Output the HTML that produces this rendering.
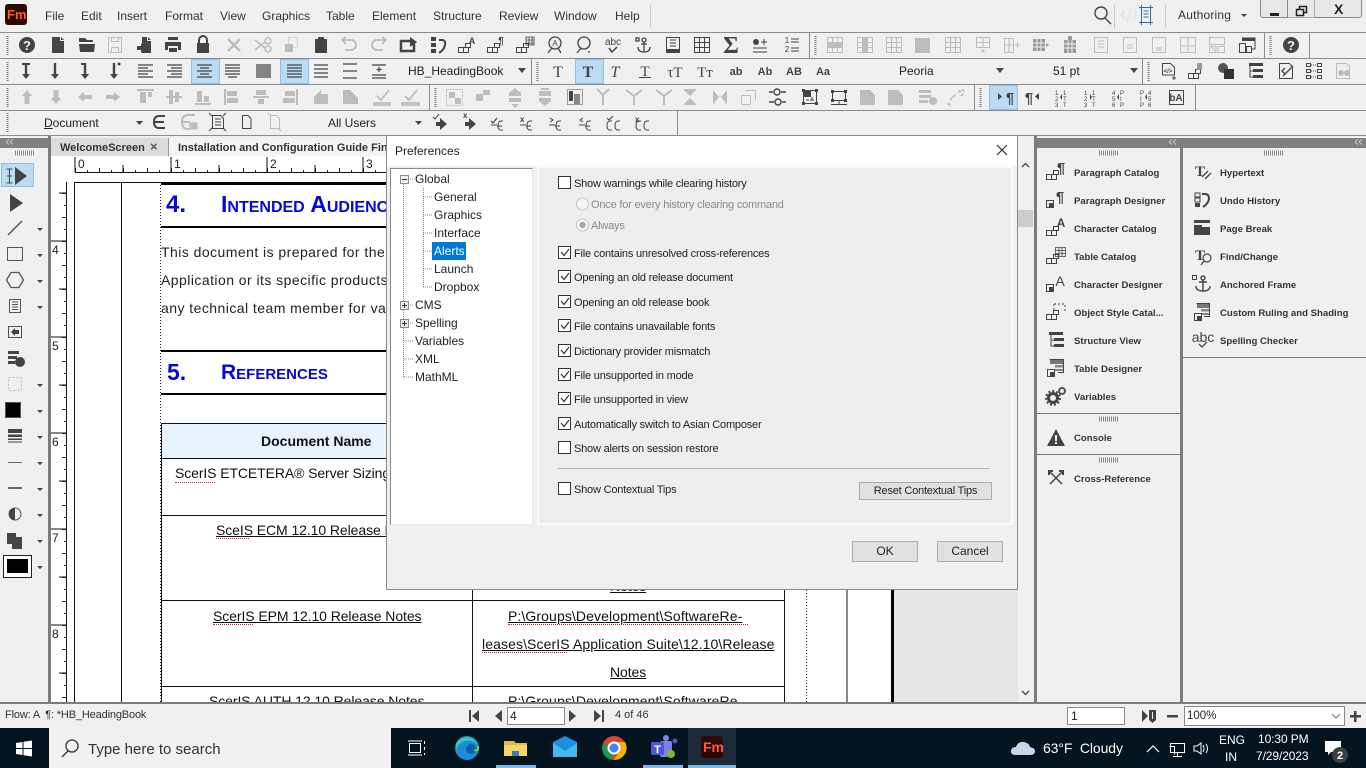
<!DOCTYPE html>
<html><head><meta charset="utf-8"><title>Preferences</title>
<style>
html,body{margin:0;padding:0;width:1366px;height:768px;overflow:hidden;background:#f0f0f0;font-family:"Liberation Sans",sans-serif}
.a{position:absolute}
.t{position:absolute;white-space:nowrap;line-height:14px;color:#333}
.m{font-size:12px;top:9px}
.tree{font-size:12px;color:#222}
.c{font-size:11px;color:#222;left:574px;letter-spacing:-.2px;margin-top:1px}
.gr{color:#8a8a8a}
.p{font-size:9.6px;font-weight:bold;color:#333}
.b{font-size:14px;color:#222;letter-spacing:.45px;line-height:16px}
.u{font-size:14px;color:#111;letter-spacing:-.08px;line-height:16px;text-decoration:underline;text-align:center}
.sq{position:absolute;height:2px;border-bottom:1px dotted #d02020}
.cb{position:absolute;left:558px;width:11px;height:11px;border:1px solid #333;background:#fff}
.btn{position:absolute;background:#e1e1e1;border:1px solid #adadad;font-size:12px;color:#222;text-align:center;box-sizing:border-box}
.h{position:absolute;background:#bcdcf4;border:1px solid #8fbfe6;box-sizing:border-box}
.w{color:#fff}
</style></head><body>

<!-- toolbar frames -->
<div class="a" style="left:0;top:32px;width:1366px;height:1px;background:#8c8c8c"></div>
<div class="a" style="left:0;top:58px;width:1366px;height:1px;background:#8c8c8c"></div>
<div class="a" style="left:0;top:84px;width:1366px;height:1px;background:#8c8c8c"></div>
<div class="a" style="left:0;top:110px;width:1366px;height:1px;background:#8c8c8c"></div>
<div class="a" style="left:809px;top:32px;width:1px;height:26px;background:#8c8c8c"></div>
<div class="a" style="left:1264px;top:32px;width:1px;height:26px;background:#8c8c8c"></div>
<div class="a" style="left:1309px;top:32px;width:1px;height:26px;background:#8c8c8c"></div>
<div class="a" style="left:531px;top:59px;width:1px;height:25px;background:#8c8c8c"></div>
<div class="a" style="left:1142px;top:59px;width:1px;height:25px;background:#8c8c8c"></div>
<div class="a" style="left:429px;top:85px;width:1px;height:25px;background:#8c8c8c"></div>
<div class="a" style="left:974px;top:85px;width:1px;height:25px;background:#8c8c8c"></div>
<div class="a" style="left:1195px;top:85px;width:1px;height:25px;background:#8c8c8c"></div>
<div class="a" style="left:677px;top:111px;width:1px;height:24px;background:#8c8c8c"></div>
<div class="h" style="left:191px;top:59px;width:29px;height:25px"></div>
<div class="h" style="left:280px;top:59px;width:29px;height:25px"></div>
<div class="h" style="left:575px;top:59px;width:29px;height:25px"></div>
<div class="h" style="left:989px;top:85px;width:29px;height:25px"></div>

<!-- menu -->
<div class="a" style="left:5px;top:4px;width:22px;height:21px;background:#2b0a05;border-radius:3px"></div>
<div class="t" style="left:7px;top:8px;font-size:13px;font-weight:bold;color:#ff5b2e">Fm</div>
<div class="t m" style="left:45px">File</div><div class="t m" style="left:81px">Edit</div><div class="t m" style="left:117px">Insert</div><div class="t m" style="left:165px">Format</div><div class="t m" style="left:220px">View</div><div class="t m" style="left:262px">Graphics</div><div class="t m" style="left:326px">Table</div><div class="t m" style="left:372px">Element</div><div class="t m" style="left:433px">Structure</div><div class="t m" style="left:499px">Review</div><div class="t m" style="left:554px">Window</div><div class="t m" style="left:615px">Help</div>
<div class="t m" style="left:1178px;top:8px;letter-spacing:.2px">Authoring</div>
<div class="a" style="left:1260px;top:-1px;width:28px;height:19px;background:#e8e8e8;border:1px solid #888;border-radius:0 0 0 3px;box-sizing:border-box"></div>
<div class="a" style="left:1288px;top:-1px;width:27px;height:19px;background:#e8e8e8;border:1px solid #aaa;border-left:0;box-sizing:border-box"></div>
<div class="a" style="left:1315px;top:-1px;width:47px;height:19px;background:#e8e8e8;border:1px solid #888;border-left:0;border-radius:0 0 3px 0;box-sizing:border-box"></div>
<div class="t" style="left:1334px;top:2px;font-size:14px;font-weight:bold;color:#222">X</div>

<div class="t" style="left:408px;top:64px;font-size:12px;color:#222">HB_HeadingBook</div>
<div class="t" style="left:899px;top:64px;font-size:12px;color:#222">Peoria</div>
<div class="t" style="left:1053px;top:64px;font-size:12px;color:#222">51 pt</div>
<div class="t" style="left:44px;top:116px;font-size:12px;color:#222"><u>D</u>ocument</div>
<div class="t" style="left:328px;top:116px;font-size:12px;color:#222">All Users</div>

<!-- panel bars -->
<div class="a" style="left:0;top:135px;width:1366px;height:1px;background:#8c8c8c"></div>
<div class="a" style="left:0;top:138px;width:48px;height:10px;background:#808080"></div>
<div class="a" style="left:48px;top:136px;width:3px;height:567px;background:#7c7c7c"></div>
<div class="a" style="left:1034px;top:136px;width:3px;height:567px;background:#7c7c7c"></div>
<div class="a" style="left:1037px;top:138px;width:329px;height:10px;background:#808080"></div>
<div class="a" style="left:1180px;top:138px;width:3px;height:565px;background:#7c7c7c"></div>
<div class="a" style="left:1037px;top:413px;width:143px;height:1px;background:#777"></div>
<div class="a" style="left:1037px;top:454px;width:143px;height:1px;background:#777"></div>
<div class="a" style="left:1183px;top:357px;width:183px;height:1px;background:#777"></div>
<div class="a" style="left:1px;top:163px;width:33px;height:24px;background:#bcdcf4;border:1px solid #8fbfe6;box-sizing:border-box"></div>

<!-- panel labels -->
<div class="t p" style="left:1074px;top:167px">Paragraph Catalog</div><div class="t p" style="left:1074px;top:195px">Paragraph Designer</div><div class="t p" style="left:1074px;top:223px">Character Catalog</div><div class="t p" style="left:1074px;top:251px">Table Catalog</div><div class="t p" style="left:1074px;top:279px">Character Designer</div><div class="t p" style="left:1074px;top:307px">Object Style Catal...</div><div class="t p" style="left:1074px;top:335px">Structure View</div><div class="t p" style="left:1074px;top:363px">Table Designer</div><div class="t p" style="left:1074px;top:391px">Variables</div><div class="t p" style="left:1074px;top:432px">Console</div><div class="t p" style="left:1074px;top:473px">Cross-Reference</div>
<div class="t p" style="left:1220px;top:167px">Hypertext</div><div class="t p" style="left:1220px;top:195px">Undo History</div><div class="t p" style="left:1220px;top:223px">Page Break</div><div class="t p" style="left:1220px;top:251px">Find/Change</div><div class="t p" style="left:1220px;top:279px">Anchored Frame</div><div class="t p" style="left:1220px;top:307px">Custom Ruling and Shading</div><div class="t p" style="left:1220px;top:335px">Spelling Checker</div>

<!-- tabs -->
<div class="a" style="left:51px;top:138px;width:967px;height:18px;background:#f4f4f4"></div>
<div class="a" style="left:51px;top:138px;width:117px;height:18px;background:#dcdcdc;border-right:1px solid #999"></div>
<div class="t" style="left:60px;top:141px;font-size:11px;font-weight:bold;color:#333">WelcomeScreen</div>
<div class="t" style="left:150px;top:140px;font-size:13px;font-weight:bold;color:#555">×</div>
<div class="t" style="left:178px;top:141px;font-size:11px;font-weight:bold;color:#333">Installation and Configuration Guide Final.fm</div>

<!-- document -->
<div class="a" style="left:0;top:0;width:1366px;height:768px;clip-path:inset(156px 348px 66px 51px)">
 <div class="a" style="left:51px;top:156px;width:843px;height:546px;background:#fff"></div>
 <div class="a" style="left:894px;top:156px;width:124px;height:546px;background:#e6e6e6"></div>
 <svg class="a" style="left:0;top:0" width="1366" height="768">
  <defs>
   <pattern id="hs" x="75" y="168" width="24" height="4" patternUnits="userSpaceOnUse"><rect width="1" height="4" fill="#222"/><rect x="12" y="2" width="1" height="2" fill="#222"/></pattern>
   <pattern id="vs" x="62" y="193" width="4" height="24" patternUnits="userSpaceOnUse"><rect width="4" height="1" fill="#222"/><rect x="2" y="12" width="2" height="1" fill="#222"/></pattern>
  </defs>
  <rect x="75" y="168" width="943" height="4" fill="url(#hs)"/>
  <rect x="62" y="182" width="4" height="520" fill="url(#vs)"/>
  <path d="M75 172.500H1018M66.500 182V702M74.500 182V702M121.500 182V702M847 182V702" stroke="#111" fill="none"/>
  <path d="M75 172V157M171 172V157M267 172V157M363 172V157M459 172V157M123 172V165M219 172V165M315 172V165M51 241H66M51 337H66M51 433H66M51 529H66M51 625H66M59 193H66M59 289H66M59 385H66M59 481H66M59 577H66M59 673H66" stroke="#111" fill="none"/>
  <path d="M160.500 182V702M806.500 182V702" stroke="#222" stroke-dasharray="1 2" fill="none"/>
  <path d="M892.500 182V702" stroke="#000" stroke-width="3"/>
  <path d="M74 182.500H893" stroke="#111"/>
  <rect x="161" y="182" width="700" height="3" fill="#000"/>
  <rect x="161" y="226" width="700" height="2" fill="#000"/>
  <rect x="161" y="350" width="700" height="2" fill="#000"/>
  <rect x="161" y="393" width="700" height="2" fill="#000"/>
  <rect x="162" y="424" width="622" height="34" fill="#e6f2fd"/>
  <path d="M161 423.500H785M161 458.500H785M161 515.500H785M161 600.500H785M161 686.500H785M161.500 424V702M472.500 424V702M784.500 424V702" stroke="#111" fill="none"/>
 </svg>
 <div class="t" style="left:78px;top:157px;font-size:12px;color:#222">0</div><div class="t" style="left:174px;top:157px;font-size:12px;color:#222">1</div><div class="t" style="left:270px;top:157px;font-size:12px;color:#222">2</div><div class="t" style="left:366px;top:157px;font-size:12px;color:#222">3</div>
 <div class="t" style="left:52px;top:243px;font-size:12px;color:#222">4</div><div class="t" style="left:52px;top:339px;font-size:12px;color:#222">5</div><div class="t" style="left:52px;top:435px;font-size:12px;color:#222">6</div><div class="t" style="left:52px;top:531px;font-size:12px;color:#222">7</div><div class="t" style="left:52px;top:627px;font-size:12px;color:#222">8</div>
 <div class="t" style="left:166px;top:192px;line-height:25px;font-size:24px;font-weight:bold;color:#0606d8">4.</div>
 <div class="t" style="left:221px;top:192px;line-height:25px;font-size:23px;font-weight:bold;color:#0606d8;font-variant:small-caps">Intended Audience</div>
 <div class="t" style="left:167px;top:360px;line-height:25px;font-size:23px;font-weight:bold;color:#0606d8">5.</div>
 <div class="t" style="left:221px;top:360px;line-height:25px;font-size:21px;font-weight:bold;color:#0606d8;font-variant:small-caps">References</div>
 <div class="t b" style="left:161px;top:244px">This document is prepared for the ScerIS</div>
 <div class="t b" style="left:161px;top:272px">Application or its specific products and</div>
 <div class="t b" style="left:161px;top:300px">any technical team member for various</div>
 <div class="t" style="left:261px;top:433px;line-height:16px;font-size:14px;font-weight:bold;color:#111">Document Name</div>
 <div class="t b" style="left:175px;top:465px;color:#111;letter-spacing:-.1px">ScerIS ETCETERA® Server Sizing Guide</div>
 <div class="t u" style="left:216px;top:522px">SceIS ECM 12.10 Release Notes</div>
 <div class="t u" style="left:213px;top:608px">ScerIS EPM 12.10 Release Notes</div>
 <div class="t u" style="left:209px;top:693px">ScerIS AUTH 12.10 Release Notes</div>
 <div class="t u" style="left:508px;top:608px;letter-spacing:.1px">P:\Groups\Development\SoftwareRe-</div>
 <div class="t u" style="left:482px;top:636px;letter-spacing:.1px">leases\ScerIS Application Suite\12.10\Release</div>
 <div class="t u" style="left:610px;top:664px">Notes</div>
 <div class="t u" style="left:610px;top:578px">Notes</div>
 <div class="t u" style="left:508px;top:693px;letter-spacing:.1px">P:\Groups\Development\SoftwareRe</div>
 <div class="sq" style="left:175px;top:480px;width:40px"></div>
 <div class="sq" style="left:216px;top:536px;width:33px"></div>
 <div class="sq" style="left:213px;top:622px;width:40px"></div>
 <div class="sq" style="left:508px;top:622px;width:240px"></div>
 <div class="sq" style="left:482px;top:650px;width:85px"></div>
</div>

<!-- scrollbar -->
<div class="a" style="left:1018px;top:156px;width:16px;height:546px;background:#f0f0f0"></div>
<div class="a" style="left:1018px;top:210px;width:15px;height:17px;background:#cdcdcd"></div>

<!-- status bar -->
<div class="a" style="left:0;top:702px;width:1366px;height:2px;background:#7c7c7c"></div>
<div class="t" style="left:5px;top:708px;font-size:11px;color:#333;letter-spacing:-.15px">Flow: A &nbsp;¶: *HB_HeadingBook</div>
<div class="a" style="left:507px;top:707px;width:58px;height:18px;background:#fff;border:1px solid #888;box-sizing:border-box"></div>
<div class="t" style="left:510px;top:709px;font-size:12px;color:#222">4</div>
<div class="t" style="left:615px;top:708px;font-size:11px;color:#333">4 of 46</div>
<div class="a" style="left:1067px;top:707px;width:58px;height:18px;background:#fff;border:1px solid #888;box-sizing:border-box"></div>
<div class="t" style="left:1071px;top:709px;font-size:12px;color:#222">1</div>
<div class="a" style="left:1184px;top:706px;width:161px;height:20px;background:#fff;border:1px solid #888;box-sizing:border-box"></div>
<div class="t" style="left:1187px;top:709px;font-size:11.5px;color:#222">100%</div>

<!-- taskbar -->
<div class="a" style="left:0;top:728px;width:1366px;height:40px;background:#03141f"></div>
<div class="a" style="left:49px;top:728px;width:342px;height:40px;background:#f1f1f1"></div>
<div class="a" style="left:688px;top:728px;width:48px;height:40px;background:#1c2b37"></div>
<div class="a" style="left:496px;top:765px;width:40px;height:3px;background:#76b9ed"></div>
<div class="a" style="left:643px;top:765px;width:40px;height:3px;background:#76b9ed"></div>
<div class="a" style="left:688px;top:765px;width:48px;height:3px;background:#76b9ed"></div>
<div class="t" style="left:88px;top:741px;line-height:18px;font-size:15px;color:#333">Type here to search</div>
<div class="a" style="left:701px;top:736px;width:22px;height:22px;background:#2b0a05;border-radius:3px"></div>
<div class="t w" style="left:703px;top:740px;font-size:14px;font-weight:bold;color:#ff5b2e">Fm</div>
<div class="t w" style="left:1043px;top:741px;font-size:14px;color:#fff;letter-spacing:-.1px">63°F &nbsp;Cloudy</div>
<div class="t w" style="left:1219px;top:733px;font-size:12px;color:#fff">ENG</div>
<div class="t w" style="left:1225px;top:750px;font-size:12px;color:#fff">IN</div>
<div class="t w" style="left:1258px;top:732px;font-size:12px;color:#fff;letter-spacing:-.1px">10:30 PM</div>
<div class="t w" style="left:1256px;top:749px;font-size:12px;color:#fff;letter-spacing:-.1px">7/29/2023</div>

<!-- icons -->
<svg class="a" style="left:0;top:0" width="1366" height="768" font-family="Liberation Sans" >
<defs>
 <g id="cat" fill="none" stroke="currentColor"><rect x="-9.500" y="2.500" width="5" height="5"/><rect x="-4.500" y="2.500" width="5" height="5"/><rect x="-2.500" y="-1.500" width="5" height="4"/></g>
 <g id="des"><rect x="-9.500" y="0.500" width="7" height="7" fill="none" stroke="currentColor"/><rect x="-7" y="3" width="5" height="5" fill="currentColor"/></g>
 <path id="gridi" d="M-7.500-7.500H7.500V7.500H-7.500ZM-7.500-2.500H7.500M-7.500 2.500H7.500M-2.500-7.500V7.500M2.500-7.500V7.500" fill="none" stroke="currentColor"/>
</defs>

<!-- row 1 -->
<g fill="#444" color="#444">
 <circle cx="27" cy="45" r="8"/><text x="27" y="50" text-anchor="middle" font-size="13" font-weight="bold" fill="#f0f0f0">?</text>
 <path transform="translate(58,45)" d="M-6-8H2V-4H6V8H-6ZM3-8L6-5H3Z"/>
 <path transform="translate(87,45)" d="M-8-3V-7H-2L0-5H6V-3ZM-8-1H8L7 7H-7Z"/>
 <path transform="translate(145,45)" d="M-3-8H2V-4H6V8H-3ZM3-8L6-5H3ZM-8 1H-4V-2L1 3-4 8V5H-8Z"/>
 <path transform="translate(173,45)" d="M-5-8H5V-5H-5ZM-8-3H8V5H5V1H-5V5H-8ZM-4 3H4V7H-4Z"/>
 <path transform="translate(203,45)" d="M-6-2H6V8H-6Z"/><path transform="translate(203,45)" d="M-4-2V-5A4 4 0 0 1 4-5V-2" fill="none" stroke="#444" stroke-width="2"/>
 <path transform="translate(321,45)" d="M-6-6H-3V-8H3V-6H6V8H-6Z"/>
 <g transform="translate(408,45)"><path d="M6-2V6H-7V-4H2" fill="none" stroke="#444" stroke-width="2.500"/><path d="M2-8L9-3 2 2Z"/></g>
 <g transform="translate(438,45)"><path d="M-7-8H-2V-4H-7ZM-7-2H-2V2H-7Z"/><rect x="-7" y="4" width="5" height="4"/><path d="M1-5H4Q8-5 7 0 6 5 1 8" fill="none" stroke="#444" stroke-width="2"/></g>
 <g transform="translate(468,45)"><use href="#cat"/><text x="4" y="-1" font-size="9" font-weight="bold" text-anchor="middle">A</text></g>
 <g transform="translate(497,45)"><use href="#cat"/><text x="4" y="-1" font-size="10" font-weight="bold" text-anchor="middle">¶</text></g>
 <g transform="translate(526,45)"><use href="#cat"/><path d="M0-8H8V0H0ZM0-5H8M0-2H8M3-8V0M6-8V0" fill="none" stroke="#444" stroke-width=".8"/></g>
 <g transform="translate(555,45)" fill="none" stroke="#444" stroke-width="1.300"><circle cy="-2" r="6"/><path d="M-3 3L-7 8M3 3L6 8"/></g>
 <text x="555" y="46" font-size="8" text-anchor="middle">A</text>
 <g transform="translate(584,45)" fill="none" stroke="#444" stroke-width="1.300"><circle cy="-2" r="6"/><path d="M-3 3L-7 8"/><path d="M5 6V8" /></g>
 <text x="613" y="45" font-size="10" text-anchor="middle">abc</text><path d="M609 48L612 52 617 47" fill="none" stroke="#444" stroke-width="1.500"/>
 <g transform="translate(644,45)" fill="none" stroke="#444" stroke-width="1.300"><circle cy="-5" r="2"/><path d="M0-3V7M-6 2Q-6 7 0 7 6 7 6 2M-3-1H3"/><rect x="-8" y="-7" width="3" height="3"/></g>
 <g transform="translate(673,45)" fill="none" stroke="#444"><path d="M-6.500-7.500H6.500V7.500H-6.500ZM-3-5H3M-3-2H3M-3 1H3"/></g><rect x="667" y="49" width="13" height="4"/>
 <use href="#gridi" x="702" y="45"/>
 <text x="731" y="53" font-size="24" font-weight="bold" font-family="Liberation Serif" text-anchor="middle">Σ</text>
 <g transform="translate(760,45)"><circle cx="-4" cy="-3" r="3"/><path d="M-7 3H7M-7 7H7M1-3H7M4-6V0" stroke="#444" fill="none"/></g>
 <g transform="translate(792,45)"><path d="M-1-6H7M-1-3H7M-1 3H7M-1 6H7" stroke="#444" fill="none"/><text x="-5" y="-2" font-size="8" text-anchor="middle">1</text><text x="-5" y="7" font-size="8" text-anchor="middle">2</text></g>
 <g transform="translate(1291,45)"><circle r="8"/><text y="5" text-anchor="middle" font-size="13" font-weight="bold" fill="#f0f0f0">?</text></g>
 <g transform="translate(1248,45)"><path d="M-6-7H7V4H3" fill="none" stroke="#444"/><rect x="-6" y="-7" width="13" height="3"/><rect x="-8.500" y="-1.500" width="6" height="9" fill="none" stroke="#444"/><rect x="-1.500" y="1.500" width="5" height="6" fill="none" stroke="#444"/></g>
</g>
<g color="#bdbdbd" fill="#bdbdbd" stroke="none">
 <path transform="translate(115,45)" d="M-6.500-7.500H6.500V7.500H-6.500ZM-3.500-7.500V-3.500H3.500V-7.500M-3.500 7.500V2.500H3.500V7.500" fill="none" stroke="#bdbdbd"/>
 <path transform="translate(234,45)" d="M-6-6L6 6M6-6L-6 6" stroke="#bdbdbd" stroke-width="2.500" fill="none"/>
 <g transform="translate(263,45)" fill="none" stroke="#bdbdbd" stroke-width="1.500"><circle cx="5" cy="4" r="3"/><circle cx="5" cy="-4" r="3"/><path d="M2 3L-8-5M2-3L-8 5"/></g>
 <g transform="translate(291,45)"><rect x="-6" y="-1" width="8" height="8"/><rect x="-2.500" y="-7.500" width="9" height="10" fill="none" stroke="#bdbdbd" stroke-dasharray="1 1"/></g>
 <path transform="translate(349,45)" d="M-3-8L-7-5-3-1M-7-5H2A4.500 4.500 0 0 1 2 5H-4" fill="none" stroke="#bdbdbd" stroke-width="1.800"/>
 <path transform="translate(379,45)" d="M3-8L7-5 3-1M7-5H-2A4.500 4.500 0 0 0-2 5H4" fill="none" stroke="#bdbdbd" stroke-width="1.800"/>
 <use href="#gridi" x="865" y="45"/><use href="#gridi" x="894" y="45"/><use href="#gridi" x="953" y="45"/>
 <g transform="translate(835,45)"><use href="#gridi"/><rect x="-7" y="-3" width="14" height="5"/></g>
 <g transform="translate(865,45)"><rect x="-3" y="-7" width="5" height="14"/></g>
 <rect x="915" y="38" width="15" height="15"/>
 <g transform="translate(983,43)" fill="none" stroke="#bdbdbd"><path d="M-6.500-5.500H6.500V4.500H-6.500ZM-6.500-.5H6.500M0-5.500V4.500M0 6V10M-2 8H2"/></g>
 <g transform="translate(1012,45)" fill="none" stroke="#bdbdbd"><path d="M-7.500-6.500H1.500V7.500H-7.500ZM-3-6.500V7.500M-7.500 0H1.500M3 0H8M5.500-3V3"/></g>
 <g transform="translate(1040,45)"><rect x="-7" y="-6" width="12" height="12" fill="#999"/><path d="M-3-6V6M1-6V6M-7-2H5M-7 2H5" stroke="#f0f0f0" fill="none"/><path d="M6-2L9 0 6 2Z" fill="#999"/></g>
 <g transform="translate(1070,45)"><rect x="-6" y="-5" width="12" height="13" fill="#999"/><rect x="-2" y="-9" width="4" height="5" fill="#999"/><path d="M-2-5V8M2-5V8M-6-1H6M-6 3H6" stroke="#f0f0f0" fill="none"/></g>
 <g transform="translate(1101,45)" fill="none" stroke="#bdbdbd"><path d="M-6.500-7.500H6.500V7.500H-6.500ZM-3-4H3M-3-1H3M-3 2H3"/></g>
 <g transform="translate(1130,45)" fill="none" stroke="#bdbdbd"><path d="M-6.500-7.500H6.500V7.500H-6.500ZM-3 0H3M-3 3H3"/></g>
 <g transform="translate(1159,45)" fill="none" stroke="#bdbdbd"><path d="M-6.500-7.500H6.500V7.500H-6.500ZM-3 3H3M-3 5H3"/></g>
 <g transform="translate(1188,45)" fill="none" stroke="#bdbdbd"><path d="M-7.500-7.500H7.500V7.500H-7.500ZM0-7.500V7.500M-7.500 1H7.500"/></g>
 <g transform="translate(1217,45)" fill="none" stroke="#bdbdbd"><path d="M-7.500-7.500H7.500V-.5H-7.500ZM-7.500 1.500H-1V7.500H-7.500ZM1 1.500H7.500V7.500H1ZM-6 2L-2 6"/></g>
</g>
<!-- grippers -->
<path d="M7.500 36V55M7.500 62V81M7.500 88V107M7.500 113V133M537.500 62V81M435.500 88V107M815.500 36V55M1270.500 36V55M1148.500 62V81M980.500 88V107" stroke="#777" stroke-width="2" stroke-dasharray="1 1" fill="none"/>
<path d="M15 153H34M1099 153H1118M1264 153H1283M1099 419H1118M1099 460H1118" stroke="#888" stroke-width="5" stroke-dasharray="1 1" fill="none"/>
<path d="M1 142L4 139.500M1 142L4 144.500M5 142L8 139.500M5 142L8 144.500" stroke="#ccc" fill="none" transform="translate(5,0)"/>
<path d="M1 142L4 139.500M1 142L4 144.500M5 142L8 139.500M5 142L8 144.500" stroke="#ccc" fill="none" transform="translate(1168,0)"/>
<path d="M1 142L4 139.500M1 142L4 144.500M5 142L8 139.500M5 142L8 144.500" stroke="#ccc" fill="none" transform="translate(1354,0)"/>

<!-- title right -->
<g fill="none" stroke="#444" stroke-width="1.400"><circle cx="1101" cy="13" r="6"/><path d="M1105 18L1111 24"/></g>
<path d="M1114.500 5V29M1165.500 5V27M650.500 5V27" stroke="#ccc"/>
<path d="M1124 10L1122 15 1124 20M1131 8L1127 22M1134 10L1136 15 1134 20" stroke="#ddd" fill="none"/>
<path d="M1139 7.500H1153M1139 22.500H1153M1141.500 5V25M1150.500 5V25M1143.500 11H1148.500M1143.500 14H1148.500M1143.500 17H1148.500" stroke="#2f6ea5" fill="none"/>
<path d="M1241 14H1247L1244 17Z" fill="#444"/>
<rect x="1270" y="13" width="9" height="3" fill="#222"/>
<path d="M1296.500 9.500H1303.500V15.500H1296.500ZM1299.500 9.500V6.500H1306.500V12.500H1303.500" fill="none" stroke="#222" stroke-width="1.500"/>

<!-- row 2 -->
<g fill="#444">
 <path d="M22 63H30V65H27.200V74H30L26 79 22 74H24.800V65H22Z"/>
 <path d="M53.800 63H56.200V74H59L55 79 51 74H53.800Z"/>
 <path d="M81 63H86.200V74H89L85 79 81 74H83.800V65H81Z"/>
 <path d="M112.800 63H115.200V74H118L114 79 110 74H112.800Z"/><circle cx="119" cy="64" r="1.500"/>
</g>
<g stroke="#444" fill="none" stroke-width="1.200">
 <path d="M138 65H153M138 68H148M138 71H153M138 74H148M138 77H153"/>
 <path d="M167 65H182M171 68H182M167 71H182M171 74H182M167 77H182"/>
 <path d="M197 65H212M200 68H209M197 71H212M200 74H209M197 77H212"/>
 <path d="M225 65H240M225 68H240M225 71H240M225 74H240M228 77H237"/>
 <path d="M256 65H271M256 67H271M256 69H271M256 71H271M256 73H271M256 75H271M256 77H271"/>
 <path d="M287 65H302M287 68H302M287 71H302M287 74H302M287 77H302"/>
 <path d="M314 65H328M314 69H328M314 73H328M314 77H328"/>
 <path d="M343 64H357M343 71H357M343 78H357"/>
 <path d="M372 65H386M372 78H386M372 75H386M379 67V72M376.500 69.500H381.500"/>
</g>
<g fill="#444">
 <path d="M518 68H526L522 73Z"/><path d="M996 68H1004L1000 73Z"/><path d="M1130 68H1138L1134 73Z"/>
 <path d="M136 121H143L139.500 125Z"/><path d="M415 121H422L418.500 125Z"/>
 <text x="558" y="77" font-size="16" font-family="Liberation Serif" text-anchor="middle">T</text>
 <text x="588" y="77" font-size="16" font-weight="bold" font-family="Liberation Serif" text-anchor="middle">T</text>
 <text x="615" y="77" font-size="16" font-style="italic" font-family="Liberation Serif" text-anchor="middle">T</text>
 <text x="645" y="76" font-size="15" font-family="Liberation Serif" text-anchor="middle">T</text><rect x="639" y="77" width="12" height="1"/>
 <text x="675" y="77" font-size="15" font-family="Liberation Serif" text-anchor="middle">τT</text>
 <text x="705" y="77" font-size="15" font-family="Liberation Serif" text-anchor="middle">Tт</text>
 <text x="736" y="75" font-size="11" font-weight="bold" text-anchor="middle">ab</text>
 <text x="765" y="75" font-size="11" font-weight="bold" text-anchor="middle">Ab</text>
 <text x="794" y="75" font-size="11" font-weight="bold" text-anchor="middle">AB</text>
 <text x="823" y="75" font-size="11" font-weight="bold" text-anchor="middle">Aa</text>
</g>
<g transform="translate(1169,71)" fill="none" stroke="#444"><path d="M-6.500-7.500H1.500L5.500-3.500V4H-6.500Z"/><path d="M5 5V9M3 7H7"/></g><text x="1168" y="73" font-size="6" font-weight="bold" text-anchor="middle" fill="#444">&lt;/&gt;</text>
<g transform="translate(1198,71)" color="#444"><use href="#cat"/><rect x="-1" y="-8" width="5" height="7" fill="#999"/></g>
<g transform="translate(1227,71)"><circle cx="-4" cy="-3" r="5" fill="#555"/><rect x="-3" y="-2" width="10" height="10" fill="#333"/></g>
<g transform="translate(1256,71)" fill="#444"><rect x="-7" y="-8" width="14" height="3"/><rect x="-3" y="-2" width="10" height="3"/><rect x="-3" y="4" width="10" height="3"/><path d="M-6-6V6H-3M-6 0H-3" fill="none" stroke="#444"/></g>
<g transform="translate(1286,71)" fill="none" stroke="#444"><path d="M-6.500-7.500H3.500L6.500-4.500V7.500H-6.500Z"/><path d="M-1-3L-4 0 -1 3M-3 5L7 -5" stroke-width="1.300"/></g>
<g transform="translate(1314,71)" fill="none" stroke="#444"><rect x="-7.500" y="-7.500" width="4" height="3"/><rect x="3.500" y="-7.500" width="4" height="3"/><rect x="-7.500" y="-1.500" width="4" height="3"/><rect x="3.500" y="-1.500" width="4" height="3"/><rect x="-7.500" y="4.500" width="4" height="3"/><rect x="3.500" y="4.500" width="4" height="3"/><path d="M-3-6H3M-3 0H3M-3 6H3" stroke-dasharray="1 1"/></g>
<g transform="translate(1343,71)"><path d="M-6.500-7.500H3.500L6.500-4.500V7.500H-6.500Z" fill="none" stroke="#bbb"/><circle cx="-2" cy="2" r="3" fill="#bbb"/><circle cx="4" cy="2" r="3" fill="#bbb"/></g>

<!-- row 3 -->
<g fill="#bdbdbd">
 <path d="M27 90L32 96H29.500V104H24.500V96H22Z"/><path d="M56 104L61 98H58.500V90H53.500V98H51Z"/>
 <path d="M78 97L84 92V95H92V99H84V102Z"/><path d="M120 97L114 92V95H106V99H114V102Z"/>
 <path d="M137 89H154V91H137ZM140 92H146V103H140ZM148 92H152V97H148Z"/>
 <path d="M166 96H182V98H166ZM169 90H173V104H169ZM175 92H179V102H175Z"/>
 <path d="M195 103H211V105H195ZM197 91H202V102H197ZM204 96H209V102H204Z"/>
 <path d="M224 89H226V105H224ZM227 91H237V96H227ZM227 98H238V103H227Z"/>
 <path d="M253 96H269V98H253ZM256 90H266V95H256ZM258 99H264V104H258Z"/>
 <path d="M296 89H298V105H296ZM285 91H295V96H285ZM283 98H295V103H283Z"/>
 <path d="M314 104V97L321 90V94H328V104Z"/>
 <path d="M343 90H350L358 98V104H343Z"/>
 <path d="M374 103H390V105H374ZM377 96L381 100 389 90" fill="none" stroke="#bdbdbd" stroke-width="1.800"/>
 <path d="M402 103H419V105H402ZM405 96L409 100 417 90" fill="none" stroke="#bdbdbd" stroke-width="1.800"/>
 <path d="M446.500 89.500H462.500V105.500H446.500Z" fill="none" stroke="#bdbdbd" stroke-dasharray="2 1"/><rect x="449" y="92" width="6" height="6"/><rect x="455" y="98" width="6" height="6"/>
 <rect x="476" y="94" width="7" height="7"/><rect x="483" y="90" width="7" height="5"/>
 <path d="M515 88L521 93V96H509V93ZM509 98H521V102H509ZM511 104H519L515 108Z"/>
 <path d="M545 106L539 101V98H551V101ZM539 91H551V96H539ZM541 88H549V90H541Z"/>
 <path d="M597 89L603 95 609 89M603 95V105" fill="none" stroke="#bdbdbd" stroke-width="2"/>
 <path d="M626 90L634 96 642 90M634 96V105" fill="none" stroke="#bdbdbd" stroke-width="2"/>
 <path d="M656 90L664 96 672 90M664 96V105" fill="none" stroke="#bdbdbd" stroke-width="2"/>
 <path d="M683 89H697L690 96ZM683 105H697L690 98Z"/>
 <path d="M713 90L719 97 713 104ZM727 90L721 97 727 104Z"/>
 <path d="M741.500 95.500H750.500V104.500H741.500ZM745.500 90.500H755.500V100.500" fill="none" stroke="#bdbdbd"/>
 <path d="M860 90H870L875 95V105H860Z"/><path d="M888 90H898L903 95V105H888Z"/>
 <path d="M919 90H931V93H919ZM919 95H931V98H919ZM919 100H928V103H919Z"/><circle cx="933" cy="101" r="4"/>
 <path d="M950 100L956 94M958 92L964 90M948 103L951 106M961 96L964 93" fill="none" stroke="#bdbdbd" stroke-width="2" stroke-dasharray="3 1"/>
</g>
<rect x="567.500" y="89.500" width="15" height="15" fill="none" stroke="#444" stroke-dasharray="1 1"/><rect x="569" y="91" width="4" height="10" fill="#444"/><rect x="574" y="94" width="6" height="10" fill="#888"/>
<g fill="#444" stroke="none">
 <g fill="none" stroke="#444" stroke-width="1.400"><circle cx="777" cy="92" r="3"/><circle cx="778" cy="102" r="3"/><path d="M769 92H773M781 92H786M769 102H774M782 102H786"/></g>
 <rect x="803.500" y="90.500" width="13" height="13" fill="none" stroke="#444"/><rect x="804" y="91" width="7" height="6"/><rect x="802" y="89" width="3" height="3"/><rect x="815" y="89" width="3" height="3"/><rect x="802" y="102" width="3" height="3"/><rect x="815" y="102" width="3" height="3"/><path d="M812 97V100M810 100H814M806 100H809" stroke="#444" fill="none"/>
 <rect x="832.500" y="91.500" width="13" height="9" fill="none" stroke="#444"/><rect x="831" y="90" width="3" height="3"/><rect x="844" y="90" width="3" height="3"/><rect x="831" y="99" width="3" height="3"/><rect x="844" y="99" width="3" height="3"/><rect x="831" y="104" width="16" height="1"/><rect x="838.500" y="100" width="1" height="4"/>
 <path d="M998 93L1002 96.500 998 100Z"/><text x="1010" y="103" font-size="15" font-weight="bold" text-anchor="middle">¶</text>
 <text x="1029" y="103" font-size="15" font-weight="bold" text-anchor="middle">¶</text><path d="M1039 93L1035 96.500 1039 100Z"/>
 <text x="1055" y="95" font-size="6">1</text><text x="1055" y="101" font-size="6">2</text><text x="1055" y="107" font-size="6">3</text><path d="M1062 94L1060 97 1062 100Z"/><text x="1063" y="95" font-size="6">1</text><text x="1063" y="101" font-size="6">T</text><text x="1063" y="107" font-size="6">T</text>
 <text x="1084" y="95" font-size="6">1</text><text x="1084" y="101" font-size="6">2</text><text x="1084" y="107" font-size="6">3</text><path d="M1090 94L1092 97 1090 100Z"/><text x="1092" y="95" font-size="6">1</text><text x="1092" y="101" font-size="6">T</text><text x="1092" y="107" font-size="6">T</text>
 <text x="1112" y="95" font-size="6">4</text><text x="1112" y="101" font-size="6">5</text><text x="1112" y="107" font-size="6">6</text><path d="M1119 94L1117 97 1119 100Z"/><text x="1120" y="95" font-size="6">P</text><text x="1120" y="101" font-size="6">I</text><text x="1120" y="107" font-size="6">P</text>
 <text x="1140" y="95" font-size="6">P</text><text x="1140" y="101" font-size="6">I</text><text x="1140" y="107" font-size="6">P</text><path d="M1147 94L1145 97 1147 100Z"/><text x="1148" y="95" font-size="6">4</text><text x="1148" y="101" font-size="6">5</text><text x="1148" y="107" font-size="6">6</text>
 <path d="M1169.500 90.500H1183.500V104.500H1169.500Z" fill="none" stroke="#444"/><text x="1176" y="101" font-size="10" font-weight="bold" text-anchor="middle">bA</text>
</g>

<!-- row 4 -->
<g fill="none" stroke="#444" stroke-width="2">
 <path d="M165 116H159Q154 116 154 122 154 128 159 128H165M153 122H164"/>
 <g stroke-width="1"><path d="M212.500 115.500H220.500L223.500 118.500V128.500H212.500ZM215 119H221M215 122H221M215 125H221M209 113L212 116M226 131L223 128M226 113L223 116M209 131L212 128"/>
 <path d="M242.500 115.500H248L251 118.500V128.500H242.500Z"/></g>
</g>
<g fill="none" stroke="#bdbdbd" stroke-width="1"><path d="M195 115H188Q182 115 182 122 182 129 188 129H190M181 122H190" stroke-width="2"/><rect x="190" y="123" width="7" height="6" fill="#bdbdbd"/><path d="M270.500 115.500H276.500L279.500 118.500V128.500H270.500ZM268 113L271 116M281 131L278 128"/></g>
<g fill="#444">
 <path d="M436 122H440V118L447 124 440 130V126H436Z"/><path d="M465 122H469V118L476 124 469 130V126H465Z"/>
 <path d="M433 117L435 119 439 114" fill="none" stroke="#444"/><text x="463" y="118" font-size="8" font-weight="bold">x</text>
 <path d="M491 121L493 123 497 118" fill="none" stroke="#444" stroke-width="1.200"/><path d="M491 125H497M503 121H501Q498 121 498 126 498 130 501 130H503M497 126H502" fill="none" stroke="#444"/>
 <text x="520" y="122" font-size="8" font-weight="bold">x</text><path d="M520 125H526M532 121H530Q527 121 527 126 527 130 530 130H532M526 126H531" fill="none" stroke="#444"/>
 <path d="M550 118L553 120 550 122M549 125H555M561 121H559Q556 121 556 126 556 130 559 130H561M555 126H560" fill="none" stroke="#444"/>
 <path d="M583 118L580 120 583 122M579 125H585M591 121H589Q586 121 586 126 586 130 589 130H591M585 126H590" fill="none" stroke="#444"/>
 <path d="M607 118L609 120 613 116M612 121H610Q607 121 607 126 607 130 610 130H612M620 121H618Q615 121 615 126 615 130 618 130H620" fill="none" stroke="#444"/>
 <text x="635" y="122" font-size="8" font-weight="bold">x</text><path d="M641 121H639Q636 121 636 126 636 130 639 130H641M649 121H647Q644 121 644 126 644 130 647 130H649" fill="none" stroke="#444"/>
</g>

<!-- left tools -->
<g fill="#444" color="#444">
 <path d="M6.500 169H12.500M6.500 183H12.500M9.500 169V183M7 176H12" stroke="#444" fill="none"/>
 <path d="M15 167L27 176 15 185Z"/>
 <path d="M10 194L23 203 10 212Z"/>
 <path d="M8 235L22 221" stroke="#555" stroke-width="1.500"/>
 <rect x="7.500" y="247.500" width="15" height="13" fill="none" stroke="#555"/>
 <path d="M11 272.500H19L23.500 280 19 287.500H11L6.500 280Z" fill="none" stroke="#555" stroke-width="1.300"/>
 <path d="M9.500 299.500H20.500V312.500H9.500ZM12 302H18M12 304.500H18M12 307H18M12 309.500H18" fill="none" stroke="#555"/>
 <path d="M8.500 326.500H21.500V337.500H8.500Z" fill="none" stroke="#555"/><path d="M11 332L15 328V330H19V334H15V336Z"/>
 <path d="M8 351H19V354H8ZM8 356H17V359H8ZM8 361H15V364H8Z"/><circle cx="20" cy="362" r="5"/>
 <rect x="8.500" y="377.500" width="13" height="13" fill="none" stroke="#bdbdbd" stroke-dasharray="2 2"/>
 <rect x="5.500" y="402.500" width="15" height="15" fill="#000" stroke="#555"/>
 <path d="M8 429H22V433H8ZM8 434.500H22V437H8ZM8 438.500H22V440H8ZM8 441.500H22V442.500H8Z"/>
 <rect x="8" y="462" width="14" height="1" fill="#666"/>
 <rect x="8" y="487" width="14" height="2" fill="#666"/>
 <circle cx="15" cy="514" r="6" fill="none" stroke="#555"/><path d="M15 508A6 6 0 0 0 15 520Z"/>
 <path d="M7 533H16V537H22V549H12V544H7Z"/>
 <rect x="3.500" y="555.500" width="28" height="22" fill="#fff" stroke="#222"/><rect x="7" y="559" width="21" height="14" fill="#000"/>
 <path d="M37 228H43L40 231ZM37 254H43L40 257ZM37 280H43L40 283ZM37 306H43L40 309ZM37 384H43L40 387ZM37 410H43L40 413ZM37 436H43L40 439ZM37 462H43L40 465ZM37 488H43L40 491ZM37 514H43L40 517ZM37 540H43L40 543ZM37 566H43L40 569Z"/>
</g>

<!-- right panel icons -->
<g fill="#444" color="#444">
 <g transform="translate(1056,172)"><use href="#cat"/><text x="5" y="1" font-size="15" font-weight="bold" text-anchor="middle">¶</text></g>
 <g transform="translate(1056,200)"><use href="#des"/><text x="4" y="2" font-size="15" font-weight="bold" text-anchor="middle">¶</text></g>
 <g transform="translate(1056,228)"><use href="#cat"/><text x="5" y="-1" font-size="12" font-weight="bold" text-anchor="middle">A</text></g>
 <g transform="translate(1056,256)"><use href="#cat"/><path d="M-.5-8.500H9.500V.5H-.5ZM-.5-5.500H9.500M-.5-2.500H9.500M3-8.500V.5M6-8.500V.5" fill="none" stroke="#444" stroke-width=".8"/></g>
 <g transform="translate(1056,284)"><use href="#des"/><text x="4" y="2" font-size="14" text-anchor="middle">A</text></g>
 <g transform="translate(1056,312)"><use href="#cat"/><path d="M-2-8H9V-1M-2-8V0" fill="none" stroke="#444" stroke-dasharray="2 2"/></g>
 <g transform="translate(1056,340)"><rect x="-7" y="-8" width="14" height="3"/><rect x="-2" y="-2" width="10" height="3"/><rect x="-2" y="4" width="10" height="3"/><path d="M-5-6V6H-2M-5 0H-2" fill="none" stroke="#444"/></g>
 <g transform="translate(1056,368)"><path d="M-6.500-8.500H7.500V4.500H2" fill="none" stroke="#444"/><rect x="-6" y="-8" width="13" height="4" fill="#777"/><rect x="-1" y="-3" width="8" height="2.500" fill="#888"/><rect x="-1" y="1" width="8" height="2" fill="#888"/><use href="#des" y="1" x="1"/></g>
 <g transform="translate(1056,396)"><circle cx="-3" cy="2" r="4.500" fill="none" stroke="#444" stroke-width="3"/><circle cx="-3" cy="2" r="7" fill="none" stroke="#444" stroke-width="2" stroke-dasharray="2 2"/><circle cx="6" cy="-5" r="3" fill="none" stroke="#555" stroke-width="2"/></g>
 <path d="M1056 429L1065 446H1047Z"/><rect x="1055" y="435" width="2" height="6" fill="#f0f0f0"/><rect x="1055" y="442" width="2" height="2" fill="#f0f0f0"/>
 <path d="M1050 472L1062 484M1062 472L1050 484" stroke="#444" stroke-width="1.500"/><path d="M1048 470H1053V472H1050V475H1048ZM1064 470H1059V472H1062V475H1064Z" fill="#444"/>
 <g transform="translate(1202,172)"><text x="-2" y="4" font-size="15" font-weight="bold" font-family="Liberation Serif" text-anchor="middle">T</text><path d="M0 5L6-1M3 7L9 1" fill="none" stroke="#444" stroke-width="1.300"/></g>
 <g transform="translate(1202,200)"><rect x="-7" y="-7" width="5" height="4" fill="none" stroke="#444"/><rect x="-7" y="-2" width="5" height="4" fill="none" stroke="#444"/><rect x="-7" y="3" width="5" height="4"/><path d="M0-6H3Q7-6 7-1 6 4 1 7" fill="none" stroke="#444" stroke-width="2"/></g>
 <g transform="translate(1202,228)"><path d="M-8-8H8V-5H-8ZM-8-3H0V-1H8V7H-8Z"/></g>
 <g transform="translate(1202,256)"><text x="-2" y="4" font-size="15" font-weight="bold" font-family="Liberation Serif" text-anchor="middle">T</text><circle cx="5" cy="2" r="4" fill="none" stroke="#444" stroke-width="1.200"/><path d="M2 5L-1 9" stroke="#444" stroke-width="1.300"/></g>
 <g transform="translate(1202,284)" fill="none" stroke="#444" stroke-width="1.400"><rect x="-9.500" y="-8.500" width="4" height="4" stroke-width="1"/><circle cx="1" cy="-6" r="2"/><path d="M1-4V7M-6 2Q-6 7 1 7 8 7 8 2M-3-2H5"/></g>
 <g transform="translate(1202,312)"><path d="M-5.500-8.500H7.500V4.500H2" fill="none" stroke="#444"/><rect x="-5" y="-8" width="12" height="4" fill="#777"/><rect x="-1" y="-3" width="8" height="2.500" fill="#888"/><rect x="-1" y="1" width="8" height="2" fill="#888"/><use href="#des" y="1" x="2"/></g>
 <text x="1203" y="342" font-size="14" text-anchor="middle">abc</text><path d="M1199 344L1202 347 1207 342" fill="none" stroke="#444" stroke-width="1.300"/>
</g>

<!-- scroll arrows -->
<path d="M1022 167L1025.500 163.500 1029 167M1022 691L1025.500 694.500 1029 691" fill="none" stroke="#444" stroke-width="1.300"/>

<!-- status icons -->
<g fill="#444">
 <rect x="469" y="710" width="2" height="12"/><path d="M472 716L479 710V722Z"/>
 <path d="M495 716L502 710V722Z"/><path d="M576 716L569 710V722Z"/>
 <path d="M601 716L594 710V722Z"/><rect x="602" y="710" width="2" height="12"/>
 <path d="M1148 716L1142 710V722Z"/><path d="M1149 710H1156V720L1152.500 723 1149 720Z"/><rect x="1152" y="712" width="1" height="7" fill="#f0f0f0"/>
 <rect x="1167" y="715" width="11" height="2.500"/>
 <rect x="1350" y="715" width="11" height="2.500"/><rect x="1354" y="711" width="2.500" height="11"/>
</g>
<path d="M1332 714L1336 718 1340 714" fill="none" stroke="#777"/>

<!-- taskbar icons -->
<g fill="#fff"><path d="M16 743L22.500 742V748H16ZM23.500 741.800L32 740.500V748H23.500ZM16 749H22.500V755L16 754ZM23.500 749H32V756.500L23.500 755.300Z"/></g>
<g fill="none" stroke="#333" stroke-width="1.300"><circle cx="72" cy="746" r="6"/><path d="M68 751L62 757"/></g>
<g fill="none" stroke="#fff"><path d="M409.500 743.500H420.500V752.500H409.500ZM408 741H422M408 755H422"/><path d="M424.500 741V744M424.500 747V750M424.500 753V755"/></g>
<circle cx="467" cy="748" r="12" fill="#1a8fd8"/><path d="M456 744A12 12 0 0 1 478 745Q473 739 465 741 457 743 456 752Z" fill="#3ccbb0"/><circle cx="471" cy="749" r="5" fill="#0d5fa8"/><path d="M474 750Q479 752 478 746" fill="none" stroke="#6ed34f" stroke-width="2"/>
<path d="M504 741V753H527V743H516L514 741Z" fill="#e8b93c"/><rect x="504" y="745" width="23" height="11" fill="#f6d468"/><rect x="512" y="751" width="7" height="5" fill="#2f7fc4"/>
<path d="M553 742L565 736 577 742V757H553Z" fill="#1a8fe0"/><path d="M553 743L565 751 577 743V757H553Z" fill="#46b8f0"/>
<circle cx="614" cy="748" r="12" fill="#db4437"/><path d="M604 742L610 752 614 760A12 12 0 0 1 604 742Z" fill="#0f9d58"/><path d="M614 760L620 750 614 742H625A12 12 0 0 1 614 760Z" fill="#f4b400"/><circle cx="614" cy="748" r="5.500" fill="#4285f4" stroke="#fff" stroke-width="2"/>
<rect x="660" y="741" width="12" height="16" fill="#7b83eb" rx="2"/><circle cx="666" cy="738" r="3" fill="#7b83eb"/><circle cx="675" cy="741" r="2.500" fill="#5059c9"/><rect x="651" y="742" width="13" height="13" fill="#5059c9" rx="1"/><text x="657.500" y="753" font-size="11" font-weight="bold" fill="#fff" text-anchor="middle">T</text><circle cx="671" cy="754" r="4" fill="#7cb82f"/>
<path d="M1016 755Q1010 755 1011 750 1012 747 1016 747 1018 741 1024 742 1029 743 1030 747 1035 748 1035 751 1035 755 1030 755Z" fill="#c6d7ec"/>
<path d="M1147 752L1153 746 1159 752" fill="none" stroke="#fff" stroke-width="1.200"/>
<path d="M1170.500 743.500H1184.500V752.500H1170.500ZM1177.500 752.500V756M1173 756.500H1182M1169.500 746.500H1174.500V754.500" fill="none" stroke="#fff"/>
<path d="M1194 746H1197L1201 743V754L1197 751H1194ZM1203 745Q1205 748.500 1203 752M1206 744Q1209 748.500 1206 753" fill="none" stroke="#fff"/>
<path d="M1325 741H1341V752H1331L1328 755V752H1325Z" fill="#fff"/><circle cx="1340" cy="755" r="8" fill="#3a3f44"/><text x="1340" y="759" font-size="11" font-weight="bold" fill="#fff" text-anchor="middle">2</text>
</svg>

<!-- dialog -->
<div class="a" style="left:386px;top:135px;width:632px;height:455px;background:#f0f0f0;border:1px solid #8a8a8a;box-sizing:border-box"></div>
<div class="a" style="left:387px;top:136px;width:630px;height:30px;background:#fff"></div>
<div class="t" style="left:395px;top:144px;font-size:12px;color:#222">Preferences</div>
<svg class="a" style="left:995px;top:143px" width="14" height="14"><path d="M2 2L12 12M12 2L2 12" stroke="#222" stroke-width="1.100"/></svg>
<div class="a" style="left:390px;top:168px;width:143px;height:357px;background:#fff;border:1px solid;border-color:#8a8a8a #e8e8e8 #e8e8e8 #8a8a8a;box-sizing:border-box"></div>
<div class="a" style="left:537px;top:166px;width:476px;height:359px;background:#eee;border:2px solid #fbfbfb;box-sizing:border-box"></div>
<svg class="a" style="left:390px;top:168px" width="143" height="240">
 <path d="M13.500 16V210M33.500 20V120M33 29H42M33 47H42M33 65H42M33 83H42M33 101H42M33 119H42M14 11H23M14 137H23M14 155H23M14 173H23M14 191H23M14 209H23" fill="none" stroke="#888" stroke-dasharray="1 1"/>
 <rect x="10.500" y="7.500" width="8" height="8" fill="#eee" stroke="#889"/><path d="M12 11.500H17" stroke="#333"/>
 <rect x="10.500" y="133.500" width="8" height="8" fill="#eee" stroke="#889"/><path d="M12 137.500H17M14.500 135V140" stroke="#333"/>
 <rect x="10.500" y="151.500" width="8" height="8" fill="#eee" stroke="#889"/><path d="M12 155.500H17M14.500 153V158" stroke="#333"/>
</svg>
<div class="a" style="left:432px;top:242px;width:34px;height:18px;background:#0078d7"></div>
<div class="t tree" style="left:415px;top:172px">Global</div><div class="t tree" style="left:434px;top:190px">General</div><div class="t tree" style="left:434px;top:208px">Graphics</div><div class="t tree" style="left:434px;top:226px">Interface</div><div class="t tree" style="left:434px;top:244px;color:#fff">Alerts</div><div class="t tree" style="left:434px;top:262px">Launch</div><div class="t tree" style="left:434px;top:280px">Dropbox</div><div class="t tree" style="left:415px;top:298px">CMS</div><div class="t tree" style="left:415px;top:316px">Spelling</div><div class="t tree" style="left:415px;top:334px">Variables</div><div class="t tree" style="left:415px;top:352px">XML</div><div class="t tree" style="left:415px;top:370px">MathML</div>

<div class="cb" style="top:176px"></div><div class="t c" style="top:176px">Show warnings while clearing history</div>
<div class="t c gr" style="top:197px;left:591px">Once for every history clearing command</div>
<div class="t c gr" style="top:218px;left:591px">Always</div>
<div class="cb" style="top:246px"></div><div class="t c" style="top:246px">File contains unresolved cross-references</div>
<div class="cb" style="top:270px"></div><div class="t c" style="top:270px">Opening an old release document</div>
<div class="cb" style="top:295px"></div><div class="t c" style="top:295px">Opening an old release book</div>
<div class="cb" style="top:319px"></div><div class="t c" style="top:319px">File contains unavailable fonts</div>
<div class="cb" style="top:344px"></div><div class="t c" style="top:344px">Dictionary provider mismatch</div>
<div class="cb" style="top:368px"></div><div class="t c" style="top:368px">File unsupported in mode</div>
<div class="cb" style="top:392px"></div><div class="t c" style="top:392px">File unsupported in view</div>
<div class="cb" style="top:417px"></div><div class="t c" style="top:417px">Automatically switch to Asian Composer</div>
<div class="cb" style="top:441px"></div><div class="t c" style="top:441px">Show alerts on session restore</div>
<div class="a" style="left:558px;top:468px;width:431px;height:1px;background:#b0b0b0"></div>
<div class="cb" style="top:482px"></div><div class="t c" style="top:482px">Show Contextual Tips</div>
<svg class="a" style="left:0;top:0;pointer-events:none" width="1366" height="768">
 <circle cx="582.500" cy="204" r="6" fill="#f6f6f6" stroke="#c4c4c4"/><circle cx="582.500" cy="225" r="6" fill="#f6f6f6" stroke="#c4c4c4"/><circle cx="582.500" cy="225" r="3.200" fill="#a8a8a8"/>
 <path d="M561 252L564 255.500 569 249M561 276L564 279.500 569 273M561 301L564 304.500 569 298M561 325L564 328.500 569 322M561 350L564 353.500 569 347M561 374L564 377.500 569 371M561 398L564 401.500 569 395M561 423L564 426.500 569 420" fill="none" stroke="#333" stroke-width="1.200"/>
</svg>
<div class="btn" style="left:859px;top:482px;width:133px;height:18px;line-height:16px;font-size:11px;letter-spacing:-.2px">Reset Contextual Tips</div>
<div class="btn" style="left:852px;top:541px;width:66px;height:21px;line-height:19px">OK</div>
<div class="btn" style="left:937px;top:541px;width:66px;height:21px;line-height:19px">Cancel</div>
</body></html>
